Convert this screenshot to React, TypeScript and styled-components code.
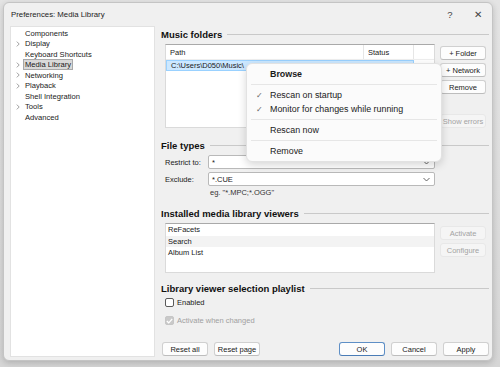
import styled, { createGlobalStyle } from 'styled-components'

const GlobalStyle = createGlobalStyle`
  html, body {
    margin: 0;
    padding: 0;
    background: #dedede;
    font-family: "Liberation Sans", Arial, sans-serif;
    color: #1a1a1a;
  }
  #root {
    width: 500px;
    height: 367px;
    overflow: hidden;
  }
`

const Screen = styled.div`
  width: 500px;
  height: 367px;
  padding: 2px 0 0 3px;
  box-sizing: border-box;
  background: linear-gradient(#e4e4e4, #d6d6d6);
`
const Window = styled.div`
  position: relative;
  width: 490px;
  height: 359px;
  box-sizing: border-box;
  background: #f0f0f0;
  border: 1px solid #c4c4c4;
  border-radius: 6px;
  box-shadow: 0 2px 6px rgba(0, 0, 0, 0.18);
  display: flex;
  flex-direction: column;
  overflow: hidden;
`
const TitleBar = styled.div`
  height: 23px;
  flex: none;
  display: flex;
  align-items: center;
  padding: 0 0 0 7px;
  font-size: 7.8px;
  color: #222;
`
const Title = styled.div`
  flex: 1;
`
const TitleButton = styled.div`
  width: 28px;
  text-align: center;
  font-size: 9.5px;
  color: #444;
`
const Body = styled.div`
  flex: 1;
  display: flex;
  padding: 0 3px 3px 6px;
  gap: 6px;
  min-height: 0;
`
const Tree = styled.div`
  width: 145px;
  flex: none;
  background: #fff;
  border: 1px solid #e2e2e2;
  box-sizing: border-box;
  padding: 1px 0 0 5px;
  font-size: 7.6px;
`
const TreeRow = styled.div`
  height: 10.5px;
  display: flex;
  align-items: center;
`
const Chevron = styled.span`
  width: 7px;
  display: flex;
  align-items: center;
`
const TreeLabel = styled.span<{ $selected?: boolean }>`
  padding: 0 1px;
  line-height: 9px;
  border: 1px solid ${(p) => (p.$selected ? '#a8a8a8' : 'transparent')};
  background: ${(p) => (p.$selected ? '#d9d9d9' : 'transparent')};
`
const Pane = styled.div`
  flex: 1;
  display: flex;
  flex-direction: column;
  font-size: 7.5px;
  min-width: 0;
`
const Heading = styled.div<{ $top: number }>`
  margin-top: ${(p) => p.$top}px;
  height: 12px;
  display: flex;
  align-items: center;
  gap: 5px;
  font-weight: bold;
  font-size: 9.5px;
  color: #111;
  &::after {
    content: '';
    flex: 1;
    height: 1px;
    background: #c9c9c9;
  }
`
const Indent = styled.div<{ $top: number }>`
  margin-top: ${(p) => p.$top}px;
  padding-left: 4px;
  display: flex;
  gap: 5px;
`
const ListBox = styled.div<{ $h: number }>`
  width: 270px;
  height: ${(p) => p.$h}px;
  box-sizing: border-box;
  background: #fff;
  border: 1px solid #dadada;
  border-top-color: #a9a9a9;
  display: flex;
  flex-direction: column;
`
const HeaderRow = styled.div`
  height: 14px;
  display: flex;
  border-bottom: 1px solid #eee;
`
const Cell = styled.div<{ $w: number; $line?: boolean }>`
  width: ${(p) => p.$w}px;
  box-sizing: border-box;
  padding-left: 4px;
  display: flex;
  align-items: center;
  border-right: ${(p) => (p.$line ? '1px solid #e6e6e6' : 'none')};
  white-space: nowrap;
  overflow: hidden;
`
const DataRow = styled.div<{ $selected?: boolean }>`
  height: 11px;
  width: 248px;
  display: flex;
  background: ${(p) => (p.$selected ? '#cce8ff' : 'transparent')};
  border: 1px solid ${(p) => (p.$selected ? '#99d1ff' : 'transparent')};
  box-sizing: border-box;
`
const ViewerItem = styled.div<{ $hover?: boolean }>`
  height: 11.5px;
  display: flex;
  align-items: center;
  padding-left: 2px;
  background: ${(p) => (p.$hover ? '#f3f3f3' : 'transparent')};
`
const ButtonColumn = styled.div<{ $top: number }>`
  padding-top: ${(p) => p.$top}px;
  display: flex;
  flex-direction: column;
  gap: 3px;
`
const Btn = styled.div<{ $disabled?: boolean; $default?: boolean; $gapTop?: number }>`
  width: 46px;
  height: 14px;
  box-sizing: border-box;
  margin-top: ${(p) => p.$gapTop ?? 0}px;
  display: flex;
  align-items: center;
  justify-content: center;
  font-size: 7.5px;
  border-radius: 3px;
  background: ${(p) => (p.$disabled ? '#f5f5f5' : '#fdfdfd')};
  color: ${(p) => (p.$disabled ? '#a3a3a3' : '#1a1a1a')};
  border: 1px solid
    ${(p) => (p.$default ? '#5e8fc6' : p.$disabled ? '#e8e8e8' : '#d0d0d0')};
  border-bottom-color: ${(p) =>
    p.$default ? '#4a7cb6' : p.$disabled ? '#e8e8e8' : '#bdbdbd'};
`
const FieldRow = styled.div<{ $top: number }>`
  margin-top: ${(p) => p.$top}px;
  padding-left: 4px;
  display: flex;
  align-items: center;
`
const FieldLabel = styled.div`
  width: 43px;
`
const Combo = styled.div`
  width: 227px;
  height: 14px;
  box-sizing: border-box;
  background: #fff;
  border: 1px solid #b9b9b9;
  border-radius: 2px;
  display: flex;
  align-items: center;
  padding: 0 4px 0 3px;
`
const ComboText = styled.div`
  flex: 1;
`
const Hint = styled.div`
  margin-top: 2px;
  padding-left: 49px;
  color: #333;
`
const CheckRow = styled.div<{ $top: number; $disabled?: boolean }>`
  margin-top: ${(p) => p.$top}px;
  padding-left: 4px;
  display: flex;
  align-items: center;
  gap: 3px;
  height: 11px;
  color: ${(p) => (p.$disabled ? '#a0a0a0' : '#1a1a1a')};
`
const Box = styled.div<{ $checked?: boolean }>`
  width: 9px;
  height: 9px;
  box-sizing: border-box;
  border-radius: 2px;
  border: 1px solid ${(p) => (p.$checked ? '#c6c6c6' : '#5a5a5a')};
  background: ${(p) => (p.$checked ? '#c9c9c9' : '#fff')};
  display: flex;
  align-items: center;
  justify-content: center;
`
const Footer = styled.div`
  margin-top: auto;
  display: flex;
  align-items: center;
  gap: 6px;
  padding-left: 1px;
  padding-bottom: 1px;
`
const Spacer = styled.div`
  flex: 1;
`
const Menu = styled.div`
  position: absolute;
  left: 242px;
  top: 60px;
  width: 196px;
  box-sizing: border-box;
  background: #fbfbfb;
  border: 1px solid #e2e2e2;
  border-radius: 6px;
  box-shadow: 0 3px 8px rgba(0, 0, 0, 0.16);
  padding: 3px 4px;
  font-size: 8.9px;
  color: #1a1a1a;
`
const MenuItem = styled.div<{ $bold?: boolean }>`
  height: 14px;
  display: flex;
  align-items: center;
  font-weight: ${(p) => (p.$bold ? 'bold' : 'normal')};
`
const MenuCheck = styled.span`
  width: 19px;
  padding-left: 5px;
  box-sizing: border-box;
  color: #666;
  font-size: 8px;
`
const MenuSep = styled.div`
  height: 1px;
  background: #e6e6e6;
  margin: 3px 0;
`

const ChevronRight = () => (
  <svg width="4" height="6" viewBox="0 0 4 6">
    <path d="M0.8 0.6 L3.2 3 L0.8 5.4" fill="none" stroke="#888" strokeWidth="0.8" />
  </svg>
)
const ChevronDown = () => (
  <svg width="7" height="5" viewBox="0 0 7 5">
    <path d="M0.5 1 L3.5 4 L6.5 1" fill="none" stroke="#555" strokeWidth="0.9" />
  </svg>
)
const Tick = () => (
  <svg width="7" height="6" viewBox="0 0 7 6">
    <path d="M0.8 3 L2.7 4.8 L6.2 1" fill="none" stroke="#fff" strokeWidth="1.2" />
  </svg>
)

const treeItems: [string, boolean][] = [
  ['Components', false],
  ['Display', true],
  ['Keyboard Shortcuts', false],
  ['Media Library', true],
  ['Networking', true],
  ['Playback', true],
  ['Shell Integration', false],
  ['Tools', true],
  ['Advanced', false],
]

export default function App() {
  return (
    <Screen>
      <GlobalStyle />
      <Window>
        <TitleBar>
          <Title>Preferences: Media Library</Title>
          <TitleButton>?</TitleButton>
          <TitleButton>✕</TitleButton>
        </TitleBar>
        <Body>
          <Tree>
            {treeItems.map(([name, expandable]) => (
              <TreeRow key={name}>
                <Chevron>{expandable && <ChevronRight />}</Chevron>
                <TreeLabel $selected={name === 'Media Library'}>{name}</TreeLabel>
              </TreeRow>
            ))}
          </Tree>
          <Pane>
            <Heading $top={2}>Music folders</Heading>
            <Indent $top={4}>
              <ListBox $h={84}>
                <HeaderRow>
                  <Cell $w={198} $line>Path</Cell>
                  <Cell $w={50} $line>Status</Cell>
                </HeaderRow>
                <DataRow $selected>
                  <Cell $w={198}>C:\Users\D050\Music\</Cell>
                  <Cell $w={50}>Monitoring</Cell>
                </DataRow>
              </ListBox>
              <ButtonColumn $top={2}>
                <Btn>+ Folder</Btn>
                <Btn>+ Network</Btn>
                <Btn>Remove</Btn>
                <Btn $disabled $gapTop={17}>Show errors</Btn>
              </ButtonColumn>
            </Indent>
            <Heading $top={11}>File types</Heading>
            <FieldRow $top={4}>
              <FieldLabel>Restrict to:</FieldLabel>
              <Combo>
                <ComboText>*</ComboText>
                <ChevronDown />
              </Combo>
            </FieldRow>
            <FieldRow $top={3}>
              <FieldLabel>Exclude:</FieldLabel>
              <Combo>
                <ComboText>*.CUE</ComboText>
                <ChevronDown />
              </Combo>
            </FieldRow>
            <Hint>eg. "*.MPC;*.OGG"</Hint>
            <Heading $top={10}>Installed media library viewers</Heading>
            <Indent $top={4}>
              <ListBox $h={50}>
                <ViewerItem>ReFacets</ViewerItem>
                <ViewerItem $hover>Search</ViewerItem>
                <ViewerItem>Album List</ViewerItem>
              </ListBox>
              <ButtonColumn $top={3}>
                <Btn $disabled>Activate</Btn>
                <Btn $disabled>Configure</Btn>
              </ButtonColumn>
            </Indent>
            <Heading $top={9}>Library viewer selection playlist</Heading>
            <CheckRow $top={3}>
              <Box />
              Enabled
            </CheckRow>
            <CheckRow $top={7} $disabled>
              <Box $checked>
                <Tick />
              </Box>
              Activate when changed
            </CheckRow>
            <Footer>
              <Btn>Reset all</Btn>
              <Btn>Reset page</Btn>
              <Spacer />
              <Btn $default>OK</Btn>
              <Btn>Cancel</Btn>
              <Btn>Apply</Btn>
            </Footer>
          </Pane>
        </Body>
        <Menu>
          <MenuItem $bold>
            <MenuCheck />
            Browse
          </MenuItem>
          <MenuSep />
          <MenuItem>
            <MenuCheck>✓</MenuCheck>
            Rescan on startup
          </MenuItem>
          <MenuItem>
            <MenuCheck>✓</MenuCheck>
            Monitor for changes while running
          </MenuItem>
          <MenuSep />
          <MenuItem>
            <MenuCheck />
            Rescan now
          </MenuItem>
          <MenuSep />
          <MenuItem>
            <MenuCheck />
            Remove
          </MenuItem>
        </Menu>
      </Window>
    </Screen>
  )
}
